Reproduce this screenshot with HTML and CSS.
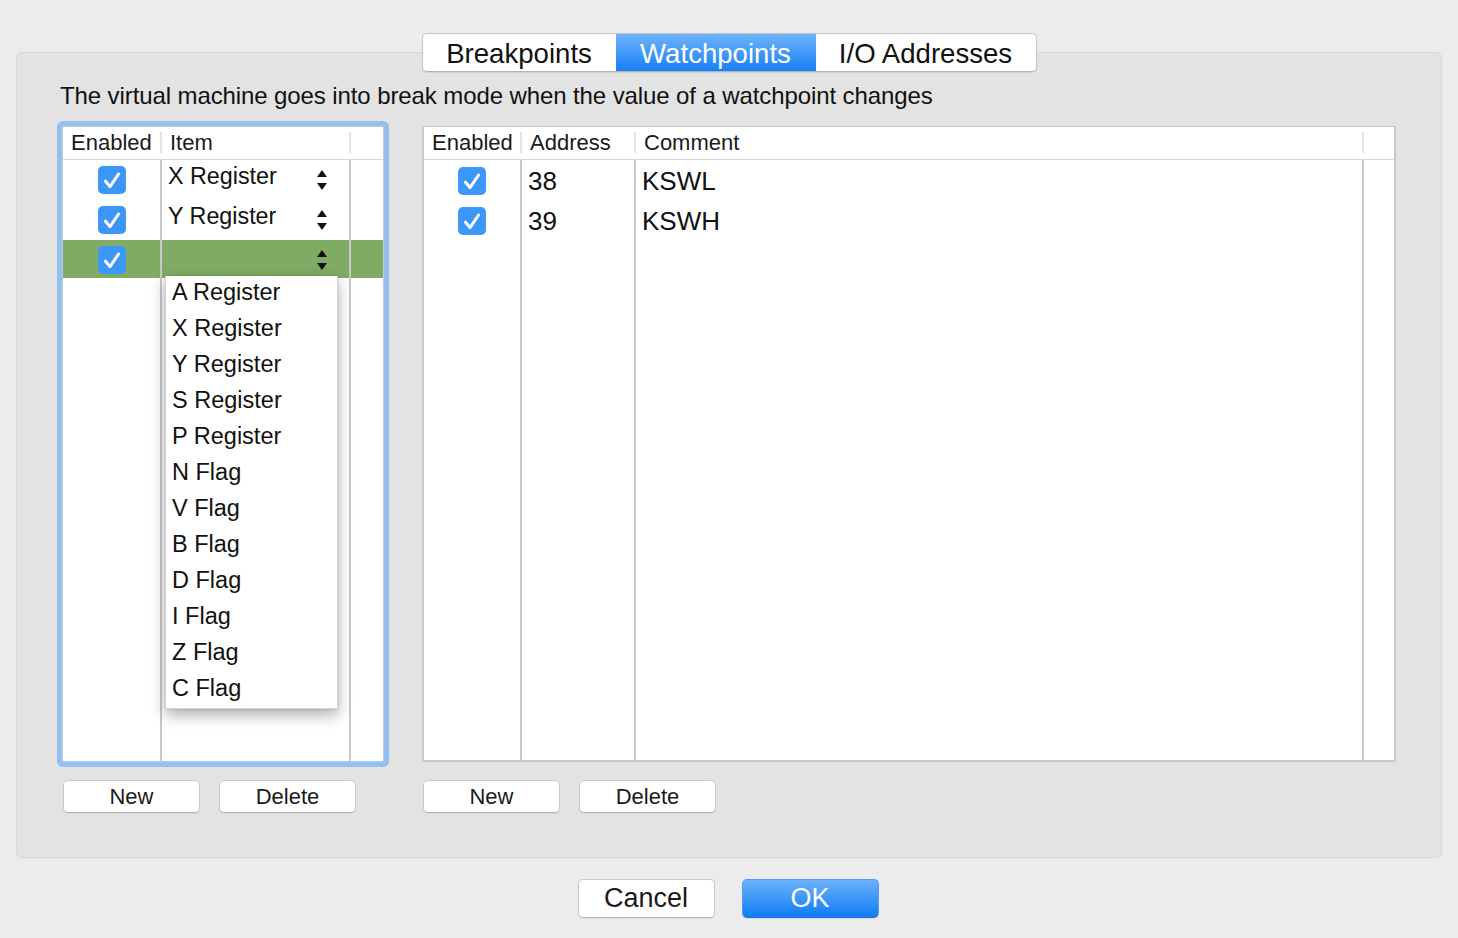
FILE: index.html
```html
<!DOCTYPE html>
<html lang="en">
<head>
<meta charset="utf-8">
<title>Watchpoints</title>
<link rel="stylesheet" href="styles.css">
</head>
<body>
<div class="window">
  <div class="tabs">
    <div class="seg">
      <div class="seg-item seg-bp">Breakpoints</div>
      <div class="seg-item seg-wp active">Watchpoints</div>
      <div class="seg-item seg-io">I/O Addresses</div>
    </div>
  </div>

  <div class="panel">
    <p class="desc">The virtual machine goes into break mode when the value of a watchpoint changes</p>
    <div class="tables">
      <div class="col">
        <div class="table table-left">
          <div class="thead">
            <div class="th">Enabled</div>
            <div class="th">Item</div>
            <div class="th last"></div>
          </div>
          <div class="tbody">
            <div class="tr">
              <div class="td center"><span class="cb"><svg viewBox="0 0 28 28" width="28" height="28"><path d="M7.5 15.2 L12 20.6 L20.6 8" fill="none" stroke="#fff" stroke-width="3" stroke-linecap="round" stroke-linejoin="round"/></svg></span></div>
              <div class="td item"><span class="item-text">X Register</span><svg class="stepper" viewBox="0 0 10 20" width="10" height="20"><polygon points="0,7 5,0 10,7" fill="#111"/><polygon points="0,13 10,13 5,20" fill="#111"/></svg></div>
              <div class="td last"></div>
            </div>
            <div class="tr">
              <div class="td center"><span class="cb"><svg viewBox="0 0 28 28" width="28" height="28"><path d="M7.5 15.2 L12 20.6 L20.6 8" fill="none" stroke="#fff" stroke-width="3" stroke-linecap="round" stroke-linejoin="round"/></svg></span></div>
              <div class="td item"><span class="item-text">Y Register</span><svg class="stepper" viewBox="0 0 10 20" width="10" height="20"><polygon points="0,7 5,0 10,7" fill="#111"/><polygon points="0,13 10,13 5,20" fill="#111"/></svg></div>
              <div class="td last"></div>
            </div>
            <div class="tr sel">
              <div class="td center"><span class="cb"><svg viewBox="0 0 28 28" width="28" height="28"><path d="M7.5 15.2 L12 20.6 L20.6 8" fill="none" stroke="#fff" stroke-width="3" stroke-linecap="round" stroke-linejoin="round"/></svg></span></div>
              <div class="td item"><span class="item-text"></span><svg class="stepper" viewBox="0 0 10 20" width="10" height="20"><polygon points="0,7 5,0 10,7" fill="#111"/><polygon points="0,13 10,13 5,20" fill="#111"/></svg></div>
              <div class="td last"></div>
            </div>
            <div class="tr filler">
              <div class="td"></div>
              <div class="td"></div>
              <div class="td last"></div>
            </div>
          </div>
          <ul class="menu">
            <li>A Register</li>
            <li>X Register</li>
            <li>Y Register</li>
            <li>S Register</li>
            <li>P Register</li>
            <li>N Flag</li>
            <li>V Flag</li>
            <li>B Flag</li>
            <li>D Flag</li>
            <li>I Flag</li>
            <li>Z Flag</li>
            <li>C Flag</li>
          </ul>
        </div>
        <div class="btns">
          <button class="btn">New</button>
          <button class="btn">Delete</button>
        </div>
      </div>

      <div class="col">
        <div class="table table-right">
          <div class="thead">
            <div class="th">Enabled</div>
            <div class="th">Address</div>
            <div class="th">Comment</div>
            <div class="th last"></div>
          </div>
          <div class="tbody">
            <div class="tr">
              <div class="td center"><span class="cb"><svg viewBox="0 0 28 28" width="28" height="28"><path d="M7.5 15.2 L12 20.6 L20.6 8" fill="none" stroke="#fff" stroke-width="3" stroke-linecap="round" stroke-linejoin="round"/></svg></span></div>
              <div class="td val">38</div>
              <div class="td val">KSWL</div>
              <div class="td last"></div>
            </div>
            <div class="tr">
              <div class="td center"><span class="cb"><svg viewBox="0 0 28 28" width="28" height="28"><path d="M7.5 15.2 L12 20.6 L20.6 8" fill="none" stroke="#fff" stroke-width="3" stroke-linecap="round" stroke-linejoin="round"/></svg></span></div>
              <div class="td val">39</div>
              <div class="td val">KSWH</div>
              <div class="td last"></div>
            </div>
            <div class="tr filler">
              <div class="td"></div>
              <div class="td"></div>
              <div class="td"></div>
              <div class="td last"></div>
            </div>
          </div>
        </div>
        <div class="btns">
          <button class="btn">New</button>
          <button class="btn">Delete</button>
        </div>
      </div>
    </div>
  </div>

  <div class="footer">
    <button class="btn btn-lg">Cancel</button>
    <button class="btn btn-lg btn-default">OK</button>
  </div>
</div>
</body>
</html>
```

FILE: styles.css
```css
* { box-sizing: border-box; }

html, body {
  margin: 0;
  padding: 0;
  background: #ececec;
}

body {
  font-family: "Liberation Sans", Arial, Helvetica, sans-serif;
  color: #1a1a1a;
  width: 1458px;
  height: 938px;
  overflow: hidden;
}

.window {
  padding: 33px 16px 0;
}

/* ---------- segmented tabs ---------- */
.tabs {
  display: flex;
  justify-content: center;
  margin-bottom: -20px;
  position: relative;
  z-index: 2;
}

.seg {
  display: flex;
  height: 39px;
  border: 1px solid #c4c4c4;
  border-bottom-color: #b4b4b4;
  border-radius: 5px;
  background: #fff;
  overflow: hidden;
  box-shadow: 0 1px 1px rgba(0, 0, 0, 0.08);
}

.seg-item {
  display: flex;
  align-items: center;
  justify-content: center;
  font-size: 27.6px;
  color: #111;
  height: 100%;
  padding-top: 2px;
}

.seg-bp { width: 193px; }
.seg-wp { width: 200px; }
.seg-io { width: 220px; }

.seg-item.active {
  color: #fff;
  background: linear-gradient(#6db3fa, #1780f6);
}

/* ---------- panel ---------- */
.panel {
  height: 806px;
  background: #e3e3e3;
  border: 1px solid #d6d6d6;
  border-radius: 6px;
  padding-top: 29px;
}

.desc {
  margin: 0 0 0 43px;
  font-size: 24px;
  letter-spacing: -0.1px;
  line-height: 27px;
  color: #111;
}

.tables {
  display: flex;
  gap: 38px;
  margin-top: 17px;
  padding-left: 45px;
}

.col {
  display: flex;
  flex-direction: column;
}

/* ---------- tables ---------- */
.table {
  position: relative;
  display: flex;
  flex-direction: column;
  background: #fff;
  height: 636px;
}

.table-left {
  width: 322px;
  border: 1px solid #b9cde3;
  border-radius: 2px;
  box-shadow: 0 0 0 5px #93c0ee;
}

.table-right {
  width: 974px;
  border-style: solid;
  border-color: #c8c8c8;
  border-width: 1px 2px 2px 2px;
}

.thead,
.tr {
  display: grid;
}

.table-left .thead,
.table-left .tr {
  grid-template-columns: 99px 189px 32px;
}

.table-right .thead,
.table-right .tr {
  grid-template-columns: 98px 114px 728px 30px;
}

.thead {
  height: 33px;
  border-bottom: 1px solid #d6d6d6;
}

.th {
  font-size: 22px;
  line-height: 32px;
  padding-left: 8px;
  color: #1a1a1a;
  white-space: nowrap;
  background: linear-gradient(#e3e3e3, #e3e3e3) right 5px / 2px 21px no-repeat;
}

.th.last {
  background: none;
}

.tbody {
  flex: 1;
  display: flex;
  flex-direction: column;
}

.tr {
  height: 40px;
}

.tr.filler {
  flex: 1;
}

.td {
  border-right: 2px solid #c9c9c9;
  display: flex;
  align-items: flex-start;
}

.td.last {
  border-right: none;
}

.td.center {
  justify-content: center;
  align-items: center;
}

.tr.sel {
  background: linear-gradient(#80ab64, #80ab64) 0 0 / 100% 38px no-repeat;
}

.cb {
  display: block;
  width: 28px;
  height: 28px;
  border-radius: 5px;
  background: #3d97f8;
}

.cb svg {
  display: block;
}

.td.item {
  justify-content: space-between;
  align-items: flex-start;
  padding: 3px 22px 0 6px;
}

.item-text {
  font-size: 23.3px;
  line-height: 26px;
  color: #111;
}

.stepper {
  display: block;
  margin-top: 7px;
}

.td.val {
  font-size: 26px;
  line-height: 40px;
  padding: 1px 0 0 6px;
  color: #111;
}

/* ---------- popup menu ---------- */
.menu {
  position: absolute;
  left: 102px;
  top: 149px;
  width: 173px;
  margin: 0;
  padding: 0;
  list-style: none;
  background: #fff;
  border: 1px solid #d4d4d4;
  border-top: none;
  box-shadow: 0 6px 14px rgba(0, 0, 0, 0.32), 0 0 2px rgba(0, 0, 0, 0.15);
  z-index: 3;
}

.menu li {
  height: 36px;
  font-size: 23.5px;
  line-height: 33px;
  padding-left: 6px;
  color: #111;
}

/* ---------- buttons ---------- */
.btns {
  display: flex;
  gap: 19px;
  margin: 18px 0 0 1px;
}

.btn {
  width: 137px;
  height: 33px;
  padding: 0;
  font-family: inherit;
  font-size: 22px;
  color: #1a1a1a;
  background: #fff;
  border: 1px solid #c8c8c8;
  border-bottom-color: #b2b2b2;
  border-radius: 5px;
  box-shadow: 0 1px 1px rgba(0, 0, 0, 0.06);
}

.footer {
  display: flex;
  justify-content: center;
  gap: 27px;
  margin-top: 21px;
  padding-right: 2px;
}

.btn-lg {
  height: 39px;
  font-size: 27px;
}

.btn-default {
  color: #fff;
  background: linear-gradient(#6bb2fb, #0f7cf5);
  border-color: #4f9cf2;
  border-bottom-color: #1c73dc;
}
```
